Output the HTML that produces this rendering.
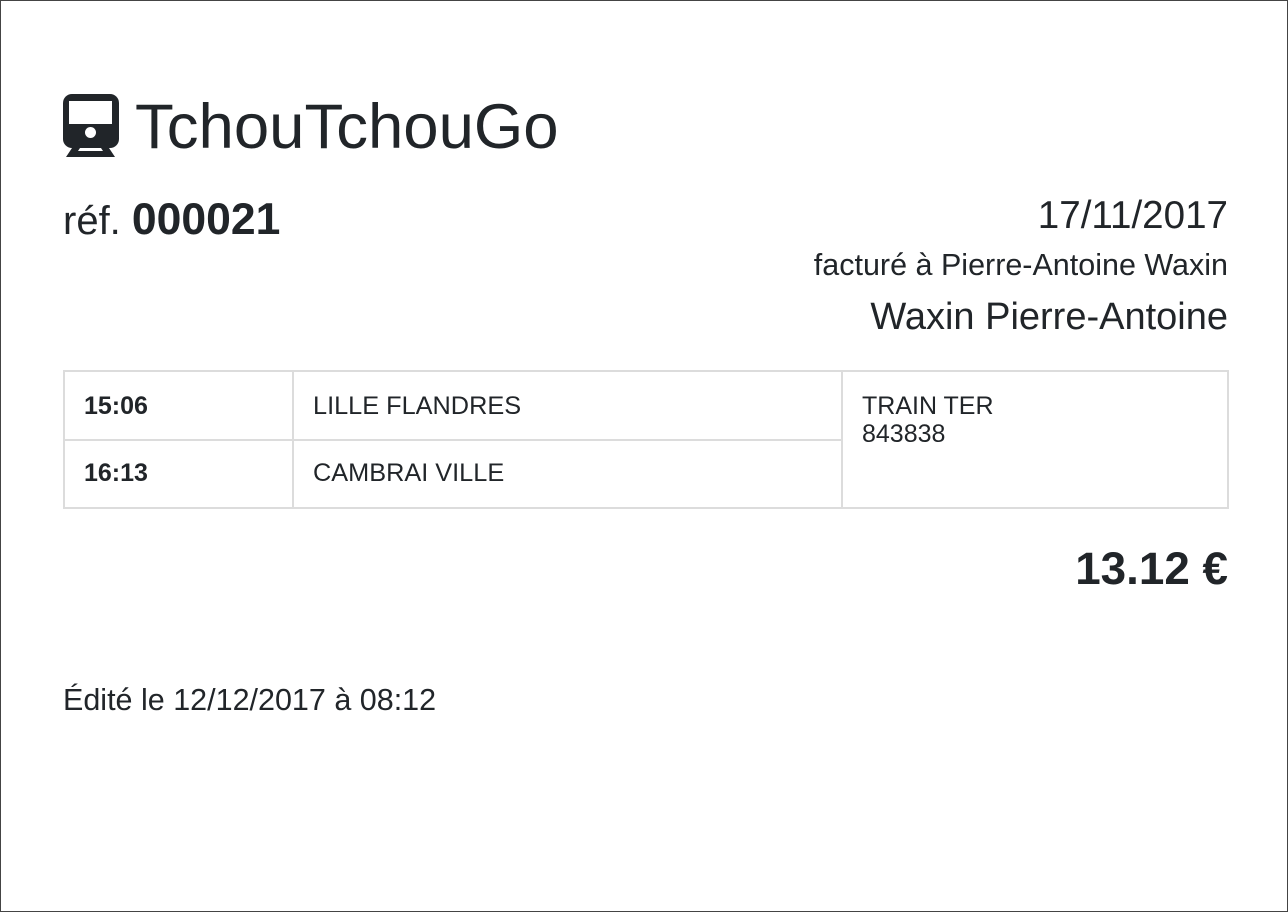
<!DOCTYPE html>
<html><head><meta charset="utf-8"><style>
html,body{margin:0;padding:0;}
body{width:1288px;height:912px;position:relative;overflow:hidden;background:#fff;font-family:"Liberation Sans",sans-serif;color:#212529;}
.frame{position:absolute;left:0;top:0;width:1286px;height:910px;border:1px solid #444;}
.t{position:absolute;line-height:1;white-space:nowrap;}
.r{right:60px;text-align:right;}
.ln{position:absolute;background:#dcdcdc;}
</style></head><body>
<div class="frame"></div>
<svg style="position:absolute;left:63px;top:94px" width="56" height="64" viewBox="0 0 56 64">
<rect x="0" y="0" width="56" height="54" rx="9" fill="#212529"/>
<rect x="6" y="7" width="43" height="23" fill="#fff"/>
<circle cx="27.5" cy="38.5" r="5.5" fill="#fff"/>
<path d="M9 54 L17 54 L15 57 L40 57 L38 54 L46 54 L52 63 L3 63 Z" fill="#212529"/>
</svg>
<div class="t" style="left:135px;top:96px;font-size:63.5px;">TchouTchouGo</div>
<div class="t" style="left:63px;top:198px;font-size:40px;">réf. <b style="font-size:44.5px">000021</b></div>
<div class="t r" style="top:197px;font-size:38.6px;">17/11/2017</div>
<div class="t r" style="top:250px;font-size:30.5px;">facturé à Pierre-Antoine Waxin</div>
<div class="t r" style="top:298px;font-size:38px;">Waxin Pierre-Antoine</div>
<div class="ln" style="left:63px;top:370px;width:1166px;height:2px"></div>
<div class="ln" style="left:63px;top:507px;width:1166px;height:2px"></div>
<div class="ln" style="left:63px;top:439px;width:780px;height:2px"></div>
<div class="ln" style="left:63px;top:370px;width:2px;height:139px"></div>
<div class="ln" style="left:292px;top:370px;width:2px;height:139px"></div>
<div class="ln" style="left:841px;top:370px;width:2px;height:139px"></div>
<div class="ln" style="left:1227px;top:370px;width:2px;height:139px"></div>
<div class="t" style="left:84px;top:394px;font-size:25px;font-weight:bold">15:06</div>
<div class="t" style="left:313px;top:394px;font-size:25.3px;">LILLE FLANDRES</div>
<div class="t" style="left:84px;top:461px;font-size:25px;font-weight:bold">16:13</div>
<div class="t" style="left:313px;top:461px;font-size:25.3px;">CAMBRAI VILLE</div>
<div class="t" style="left:862px;top:394px;font-size:25px;">TRAIN TER</div>
<div class="t" style="left:862px;top:422px;font-size:25px;">843838</div>
<div class="t r" style="top:546px;font-size:45.8px;font-weight:bold">13.12 €</div>
<div class="t" style="left:63px;top:685px;font-size:30.5px;">Édité le 12/12/2017 à 08:12</div>
</body></html>
